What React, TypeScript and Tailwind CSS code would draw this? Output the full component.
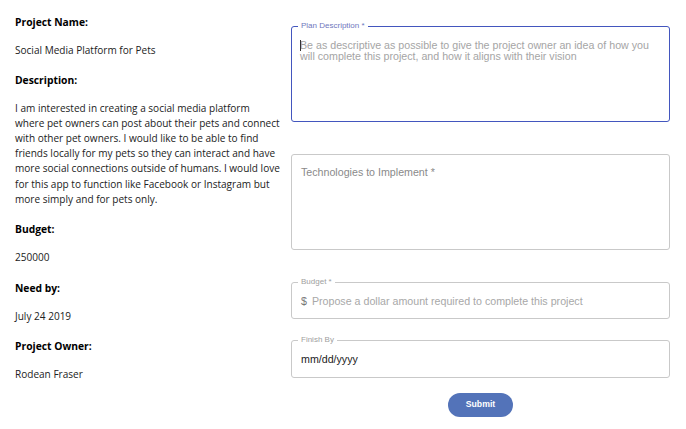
import React from "react";

const leftFont = { fontFamily: '"Open Sans", "Noto Sans", sans-serif' };

function Heading({ children, className = "" }: { children: React.ReactNode; className?: string }) {
  return <p className={`font-bold text-[10.3px] leading-[15px] text-black ${className}`}>{children}</p>;
}
function Value({ children, className = "" }: { children: React.ReactNode; className?: string }) {
  return <p className={`text-[10.05px] leading-[15.1px] text-[#222] ${className}`}>{children}</p>;
}

export default function App() {
  return (
    <div className="w-[686px] h-[429px] bg-white flex">
      <div className="w-[276px] pl-[15px] pt-[15px]" style={leftFont}>
        <Heading>Project Name:</Heading>
        <Value className="mt-[13px]">Social Media Platform for Pets</Value>
        <Heading className="mt-[15px]">Description:</Heading>
        <Value className="mt-[13px] whitespace-nowrap">
          I am interested in creating a social media platform
          <br />
          where pet owners can post about their pets and connect
          <br />
          with other pet owners. I would like to be able to find
          <br />
          friends locally for my pets so they can interact and have
          <br />
          more social connections outside of humans. I would love
          <br />
          for this app to function like Facebook or Instagram but
          <br />
          more simply and for pets only.
        </Value>
        <Heading className="mt-[15px]">Budget:</Heading>
        <Value className="mt-[13px]">250000</Value>
        <Heading className="mt-[16px]">Need by:</Heading>
        <Value className="mt-[13px]">July 24 2019</Value>
        <Heading className="mt-[15px]">Project Owner:</Heading>
        <Value className="mt-[13px]">Rodean Fraser</Value>
      </div>

      <div
        className="ml-[15px] w-[379px] pt-[26px] flex flex-col"
        style={{ fontFamily: '"Liberation Sans", Arial, sans-serif' }}
      >
        {/* Plan Description (focused) */}
        <div className="relative h-[96px] rounded-[3px] border-[1.5px] border-[#4356be] pl-[8px] pr-[10px] pt-[12.5px]">
          <span className="absolute left-[6px] top-[-6px] bg-white px-[3px] text-[8px] leading-[10px] text-[#6f77bd]">
            Plan Description *
          </span>
          <span className="absolute left-[8px] top-[13px] h-[11px] w-[1px] bg-[#333]" />
          <p className="text-[10.67px] leading-[11.7px] text-[#a5a5a5]">
            Be as descriptive as possible to give the project owner an idea of how you will complete this
            project, and how it aligns with their vision
          </p>
        </div>

        {/* Technologies */}
        <div className="mt-[32px] h-[96px] rounded-[3px] border border-[#c9c9c9] pl-[9px] pt-[11px]">
          <p className="text-[10.67px] leading-[13px] text-[#8a8a8a]">Technologies to Implement *</p>
        </div>

        {/* Budget */}
        <div className="relative mt-[32px] h-[37px] rounded-[3px] border border-[#c9c9c9] pl-[9px] flex items-center">
          <span className="absolute left-[6px] top-[-6px] bg-white px-[3px] text-[8px] leading-[10px] text-[#a0a0a0]">
            Budget *
          </span>
          <span className="text-[10.67px] text-[#777]">$</span>
          <span className="ml-[5px] text-[10.67px] text-[#a8a8a8]">
            Propose a dollar amount required to complete this project
          </span>
        </div>

        {/* Finish By */}
        <div className="relative mt-[21px] h-[38px] rounded-[3px] border border-[#c9c9c9] pl-[9px] flex items-center">
          <span className="absolute left-[6px] top-[-6px] bg-white px-[3px] text-[8px] leading-[10px] text-[#a0a0a0]">
            Finish By
          </span>
          <span className="text-[10.67px] text-[#222]">mm/dd/yyyy</span>
        </div>

        <div className="mt-[15px] flex justify-center">
          <button className="h-[24px] w-[65px] rounded-full bg-[#5373b9] text-white text-[8.7px] font-bold">
            Submit
          </button>
        </div>
      </div>
    </div>
  );
}
